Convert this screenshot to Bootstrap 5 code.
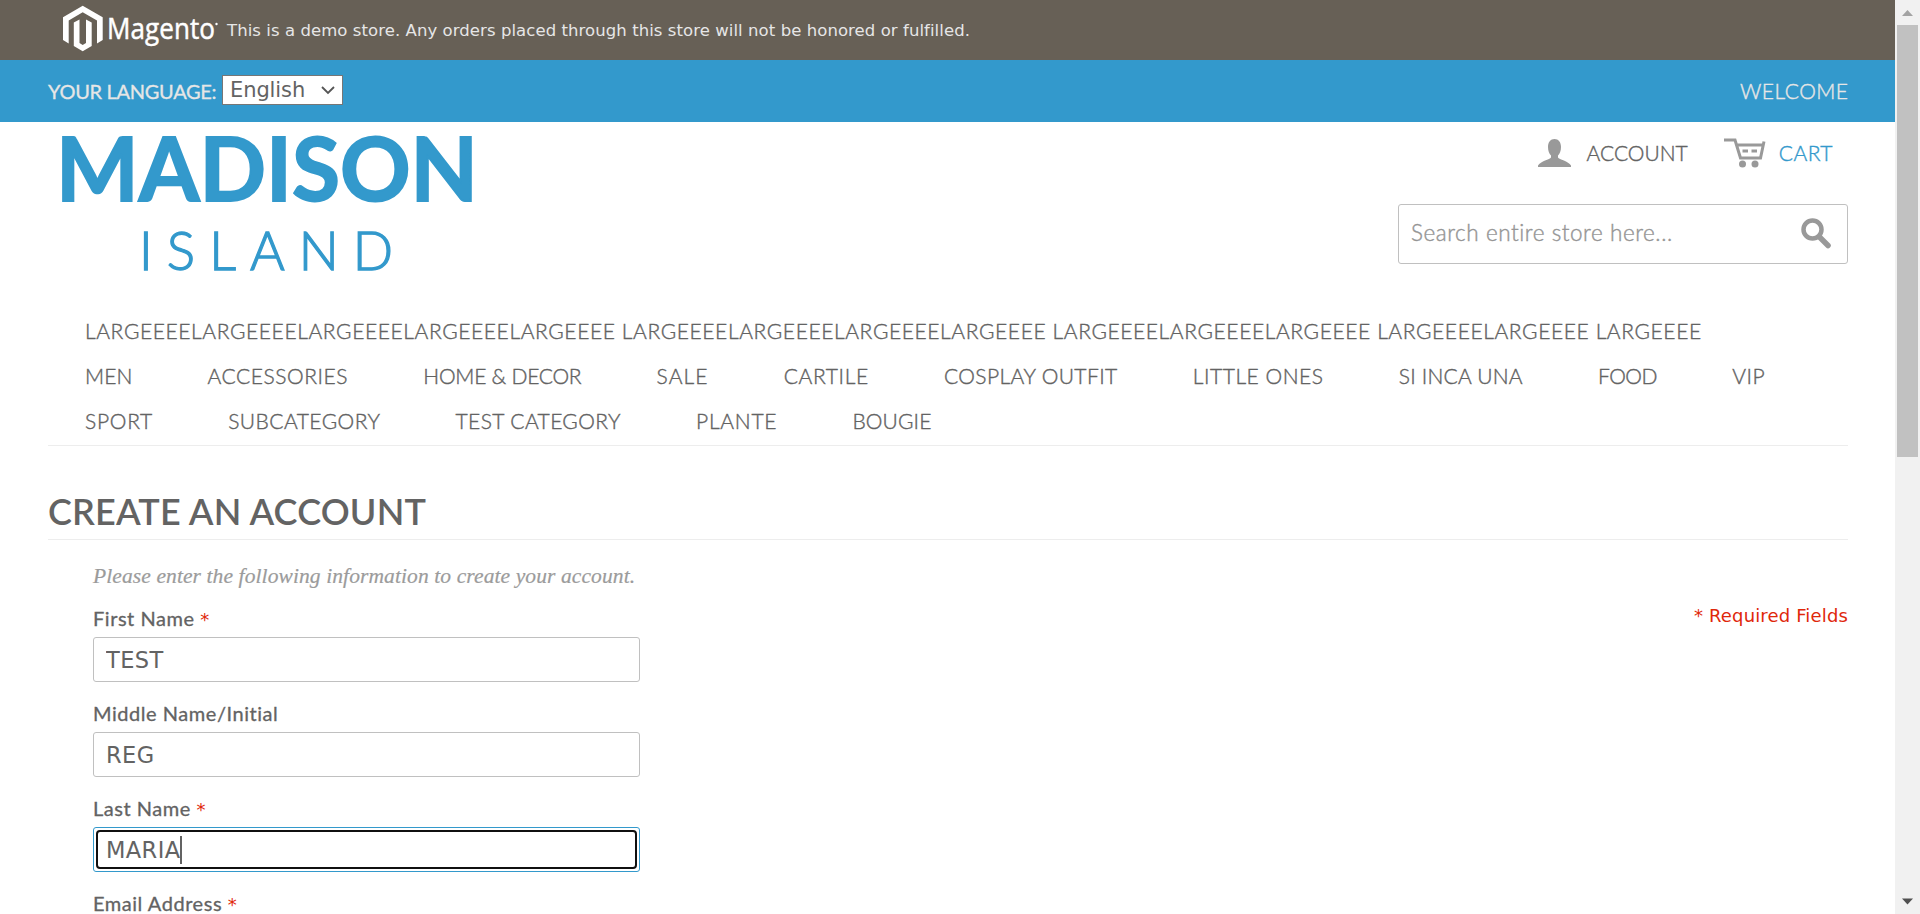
<!DOCTYPE html>
<html lang="en">
<head>
<meta charset="utf-8">
<title>Create an Account</title>
<link href="https://cdn.jsdelivr.net/npm/bootstrap@5.3.0/dist/css/bootstrap.min.css" rel="stylesheet">
<style>
body{height:914px;overflow:hidden;color:#636363;font-family:"DejaVu Sans",sans-serif}
.page{width:1895px;height:914px;overflow:hidden}
.px-page{padding-left:48px;padding-right:47px}
.thin{font-family:Lato,sans-serif;font-weight:300;font-size:21px;-webkit-text-stroke:.4px currentColor}
.demo-bar{height:60px;background:#676056;color:#e6e6e6;font-size:16.5px;letter-spacing:.07px;padding-left:62px}
.demo-bar span{padding-top:2px;margin-left:7px;line-height:24px}
.demo-bar svg,.brand-logo{overflow:visible}
.lang-bar{height:62px;background:#39c;color:#e6e6e6}
.lang-label{font:400 20px/30px Lato,sans-serif;letter-spacing:-.3px;width:174px;-webkit-text-stroke:.3px currentColor}
.lang-select{width:121px;height:30px;margin-top:-2px;border:1px solid #767676;background:#fff;color:#636363;font-size:21px;line-height:28px;letter-spacing:-.1px;padding:0 7px}
.welcome{letter-spacing:.5px;margin-right:-.5px;margin-top:-1px}
.site-header{height:186px}
.brand-logo{margin:10px 0 0 12px}
.tools{width:450px;padding-top:13px}
.tool-links{height:36px;padding-right:15px}
.cart-icon{margin-left:36px;margin-right:13px}
.cart-text{color:#39c;letter-spacing:.5px}
.search-box{height:60px;margin-top:33px;border:1px solid #c0c0c0;border-radius:3px;padding:0 16px 2px 12px}
.search-box input{border:0;outline:0;padding:0;font-size:22.5px;letter-spacing:.56px;color:#636363;background:transparent}
.search-box input::placeholder{color:#959595;opacity:1}
.main-nav{margin:0 47px 0 48px;padding-left:37px;border-bottom:1px solid #ededed;height:138px;column-gap:75.200px;align-content:flex-start}
.main-nav li{line-height:45px;height:45px;white-space:nowrap}
.main-nav li:nth-child(1){letter-spacing:.61px}
.main-nav li:nth-child(2){letter-spacing:.1px}
.main-nav li:nth-child(3){letter-spacing:.55px}
.main-nav li:nth-child(4){letter-spacing:-.24px}
.main-nav li:nth-child(5){letter-spacing:1.1px}
.main-nav li:nth-child(6){letter-spacing:.64px}
.main-nav li:nth-child(7){letter-spacing:.41px}
.main-nav li:nth-child(8){letter-spacing:.54px}
.main-nav li:nth-child(9){letter-spacing:.22px}
.main-nav li:nth-child(10){letter-spacing:-.48px}
.main-nav li:nth-child(11){letter-spacing:.54px}
.main-nav li:nth-child(12){letter-spacing:.74px}
.main-nav li:nth-child(13){letter-spacing:.46px}
.main-nav li:nth-child(14){letter-spacing:.39px}
.main-nav li:nth-child(15){letter-spacing:.75px}
.main-nav li:nth-child(16){letter-spacing:.13px}
.page-title{margin:38px 47px 0 48px;height:56px;border-bottom:1px solid #ededed}
.page-title h1{font:600 36px/54px Lato,sans-serif;letter-spacing:.17px;margin:0}
.form-area{padding:21px 47px 0 93px}
.intro{font:italic 21.5px/30px "Liberation Serif",serif;letter-spacing:.1px;color:#9b9b9b;margin:0 0 12px;-webkit-text-stroke:.2px currentColor}
.field{width:547px;margin-bottom:16px}
.field label{display:block;font:400 20px/30px Lato,sans-serif;letter-spacing:.54px;margin-bottom:4px;white-space:nowrap;-webkit-text-stroke:.3px currentColor}
.field em,.required{color:#df280a;font-style:normal}
.field em{font:18px "DejaVu Sans",sans-serif;line-height:1;-webkit-text-stroke:0}
.field .form-control{height:45px;border:1px solid #c0c0c0;border-radius:3px;color:#636363;font-size:22.5px;line-height:30px;letter-spacing:.4px;padding:0 12px;box-shadow:none}
.focused{position:relative;border-color:#39c!important;display:flex;align-items:center}
.focused::before{content:"";position:absolute;inset:2px;border:2px solid #101010;border-radius:4px}
.caret{width:2px;height:28px;background:#636363}
.required{font-size:18px;letter-spacing:.15px;line-height:26px}
.scrollbar{width:25px;height:914px;background:#f1f1f1}
.scroll-thumb{width:21px;height:432px;background:#c1c1c1;margin-left:2px}
</style>
</head>
<body class="d-flex bg-white">
<div class="page">
  <div class="demo-bar d-flex align-items-center">
    <svg width="158" height="60" viewBox="62 0 158 60" fill="#fff">
      <path d="M82.7 5.7 102.7 17.2V40l-5.7 3.4V20.5L82.7 12.3 68.7 20.5v22.9L63 40V17.2z"/>
      <path d="M73.8 22.5l5.7-3V43l3.2 2 3.3-2V19.500l5.7 3V46l-9 5.300-8.900-5.300z"/>
      <text x="107" y="39" font-family="Open Sans, sans-serif" font-weight="500" font-size="29" textLength="108" lengthAdjust="spacingAndGlyphs" stroke="#fff" stroke-width=".5">Magento</text>
      <circle cx="216.500" cy="24" r="1.200"/>
    </svg>
    <span>This is a demo store. Any orders placed through this store will not be honored or fulfilled.</span>
  </div>
  <div class="lang-bar px-page d-flex align-items-center">
    <div class="lang-label text-nowrap">YOUR LANGUAGE:</div>
    <div class="lang-select d-flex justify-content-between align-items-center"><span>English</span>
      <svg width="14" height="9" viewBox="0 0 14 9" fill="none" stroke="#555" stroke-width="1.800"><path d="M1 1l6 6 6-6"/></svg>
    </div>
    <div class="thin welcome ms-auto">WELCOME</div>
  </div>
  <header class="site-header px-page d-flex justify-content-between">
    <svg class="brand-logo" width="424" height="150" viewBox="60 132 424 150" fill="#39c" stroke="#39c">
      <text x="56" y="201" font-family="Lato, sans-serif" font-weight="700" font-size="88" textLength="422" lengthAdjust="spacingAndGlyphs" stroke-width="1.800">MADISON</text>
      <text x="139" y="270" font-family="Lato, sans-serif" font-weight="300" font-size="53" letter-spacing="14" stroke-width="1.300">ISLAND</text>
    </svg>
    <div class="tools">
      <div class="tool-links thin d-flex justify-content-end align-items-center">
        <svg width="33" height="29" viewBox="0 0 33 29" fill="#999"><path d="M10 8c0-5 2.500-8 6.500-8S23 3 23 8c0 4-1.200 6.500-3 8.500v2c1 2 10.500 3.500 13 8V28H0v-1.500C2.500 22 12 20.500 13 18.500v-2c-1.800-2-3-4.500-3-8.500z"/></svg>
        <span class="ms-3">ACCOUNT</span>
        <svg class="cart-icon" width="42" height="30" viewBox="0 0 42 30" fill="none" stroke="#999" stroke-width="3"><path d="M0 2h11l5.500 18h20L40 3.500M11.500 7H39"/><path d="M18.500 13h5.500M27.500 13h5.500"/><g fill="#999" stroke="none"><circle cx="18.500" cy="26" r="3.500"/><circle cx="31" cy="26" r="3.500"/></g></svg>
        <span class="cart-text">CART</span>
      </div>
      <div class="search-box d-flex align-items-center">
        <input class="thin flex-grow-1" placeholder="Search entire store here...">
        <svg width="30" height="31" viewBox="0 0 30 31" fill="none" stroke="#999"><circle cx="11.500" cy="11.500" r="9" stroke-width="4.500"/><path d="M18.500 19l8.500 8.500" stroke-width="5.500" stroke-linecap="round"/></svg>
      </div>
    </div>
  </header>
  <ul class="main-nav thin list-unstyled d-flex flex-wrap">
    <li class="w-100">LARGEEEELARGEEEELARGEEEELARGEEEELARGEEEE LARGEEEELARGEEEELARGEEEELARGEEEE LARGEEEELARGEEEELARGEEEE LARGEEEELARGEEEE LARGEEEE</li>
    <li>MEN</li><li>ACCESSORIES</li><li>HOME &amp; DECOR</li><li>SALE</li><li>CARTILE</li><li>COSPLAY OUTFIT</li><li>LITTLE ONES</li><li>SI INCA UNA</li><li>FOOD</li><li>VIP</li><li>SPORT</li><li>SUBCATEGORY</li><li>TEST CATEGORY</li><li>PLANTE</li><li>BOUGIE</li>
  </ul>
  <div class="page-title"><h1>CREATE AN ACCOUNT</h1></div>
  <div class="form-area">
    <p class="intro">Please enter the following information to create your account.</p>
    <div class="d-flex justify-content-between align-items-start">
      <form>
        <div class="field"><label>First Name <em>*</em></label><input class="form-control" value="TEST"></div>
        <div class="field"><label>Middle Name/Initial</label><input class="form-control" value="REG"></div>
        <div class="field"><label>Last Name <em>*</em></label><div class="form-control focused"><span>MARIA</span><span class="caret"></span></div></div>
        <div class="field"><label>Email Address <em>*</em></label></div>
      </form>
      <div class="required">* Required Fields</div>
    </div>
  </div>
</div>
<div class="scrollbar d-flex flex-column">
  <svg width="25" height="25" viewBox="0 0 25 25" fill="#a3a3a3"><path d="M12.500 10l5.500 6H7z"/></svg>
  <div class="scroll-thumb"></div>
  <svg class="mt-auto" width="25" height="25" viewBox="0 0 25 25" fill="#505050"><path d="M12.500 15.500L18 9.500H7z"/></svg>
</div>
<script src="https://cdn.jsdelivr.net/npm/bootstrap@5.3.0/dist/js/bootstrap.bundle.min.js"></script>
</body>
</html>
